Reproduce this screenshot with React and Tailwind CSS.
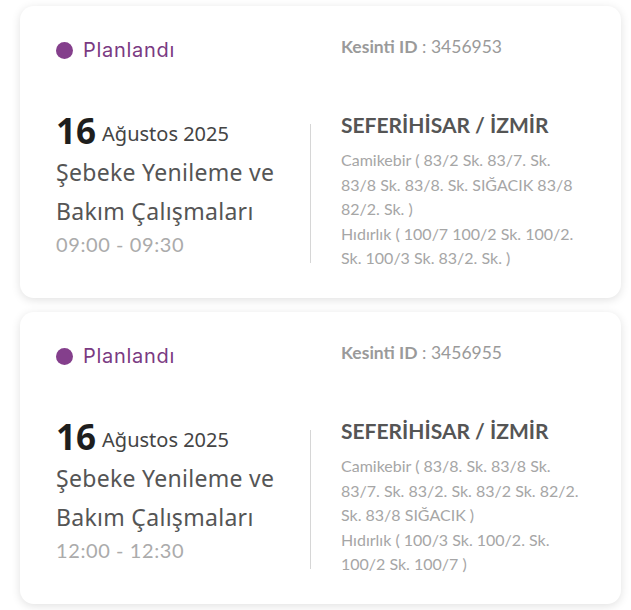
import React from "react";

const cards = [
  {
    id: "3456953",
    time: "09:00 - 09:30",
    lines: [
      "Camikebir ( 83/2 Sk. 83/7. Sk.",
      "83/8 Sk. 83/8. Sk. SIĞACIK 83/8",
      "82/2. Sk. )",
      "Hıdırlık ( 100/7 100/2 Sk. 100/2.",
      "Sk. 100/3 Sk. 83/2. Sk. )",
    ],
  },
  {
    id: "3456955",
    time: "12:00 - 12:30",
    lines: [
      "Camikebir ( 83/8. Sk. 83/8 Sk.",
      "83/7. Sk. 83/2. Sk. 83/2 Sk. 82/2.",
      "Sk. 83/8 SIĞACIK )",
      "Hıdırlık ( 100/3 Sk. 100/2. Sk.",
      "100/2 Sk. 100/7 )",
    ],
  },
];

const geo = { fontFamily: "Lato, 'Noto Sans', sans-serif" };
const wide = { fontFamily: "Inter, Lato, sans-serif" };
const hum = { fontFamily: "'Noto Sans', 'Open Sans', sans-serif" };

function Card({ c }) {
  return (
    <div className="h-[292px] w-[601px] rounded-[14px] bg-white pl-[36px] pt-[30px] shadow-[0_2px_10px_rgba(0,0,0,0.12)]">
      <div className="flex h-[26px] items-center">
        <div className="flex w-[285px] items-center gap-[10px]">
          <span className="mt-[2px] h-[17px] w-[17px] rounded-full bg-[#843f8c]" />
          <span className="mt-[2px] text-[20px] tracking-[0.7px] text-[#7a3a82]" style={wide}>Planlandı</span>
        </div>
        <div className="-mt-[4px] text-[17.5px] text-[#9a9a9a]" style={geo}>
          <span className="font-bold">Kesinti ID</span> : {c.id}
        </div>
      </div>
      <div className="mt-[48px] flex">
        <div className="w-[254px] pt-[1px]" style={hum}>
          <div className="flex h-[40px] items-center gap-[6px]">
            <span className="text-[35px] font-bold leading-[40px] text-[#1e1e1e]">16</span>
            <span className="mt-[6px] text-[20px] text-[#444]">Ağustos 2025</span>
          </div>
          <div className="mt-[2px] text-[23px] leading-[39px] tracking-[0.3px] text-[#555]">
            Şebeke Yenileme ve<br />Bakım Çalışmaları
          </div>
          <div className="text-[20px] leading-[26px] tracking-[0.6px] text-[#ababab]" style={geo}>
            {c.time}
          </div>
        </div>
        <div className="mt-[14px] h-[139px] w-px bg-[#d6d6d6]" />
        <div className="pl-[30px]" style={geo}>
          <div className="text-[21px] font-bold leading-[30px] text-[#555]">SEFERİHİSAR / İZMİR</div>
          <div className="mt-[8px] whitespace-nowrap text-[16px] leading-[24.5px] text-[#a6a6a6]">
            {c.lines.map((l, i) => (
              <div key={i}>{l}</div>
            ))}
          </div>
        </div>
      </div>
    </div>
  );
}

export default function App() {
  return (
    <div className="flex min-h-[610px] w-[631px] flex-col gap-[14px] bg-white pl-[20px] pt-[6px]">
      {cards.map((c) => (
        <Card key={c.id} c={c} />
      ))}
    </div>
  );
}
